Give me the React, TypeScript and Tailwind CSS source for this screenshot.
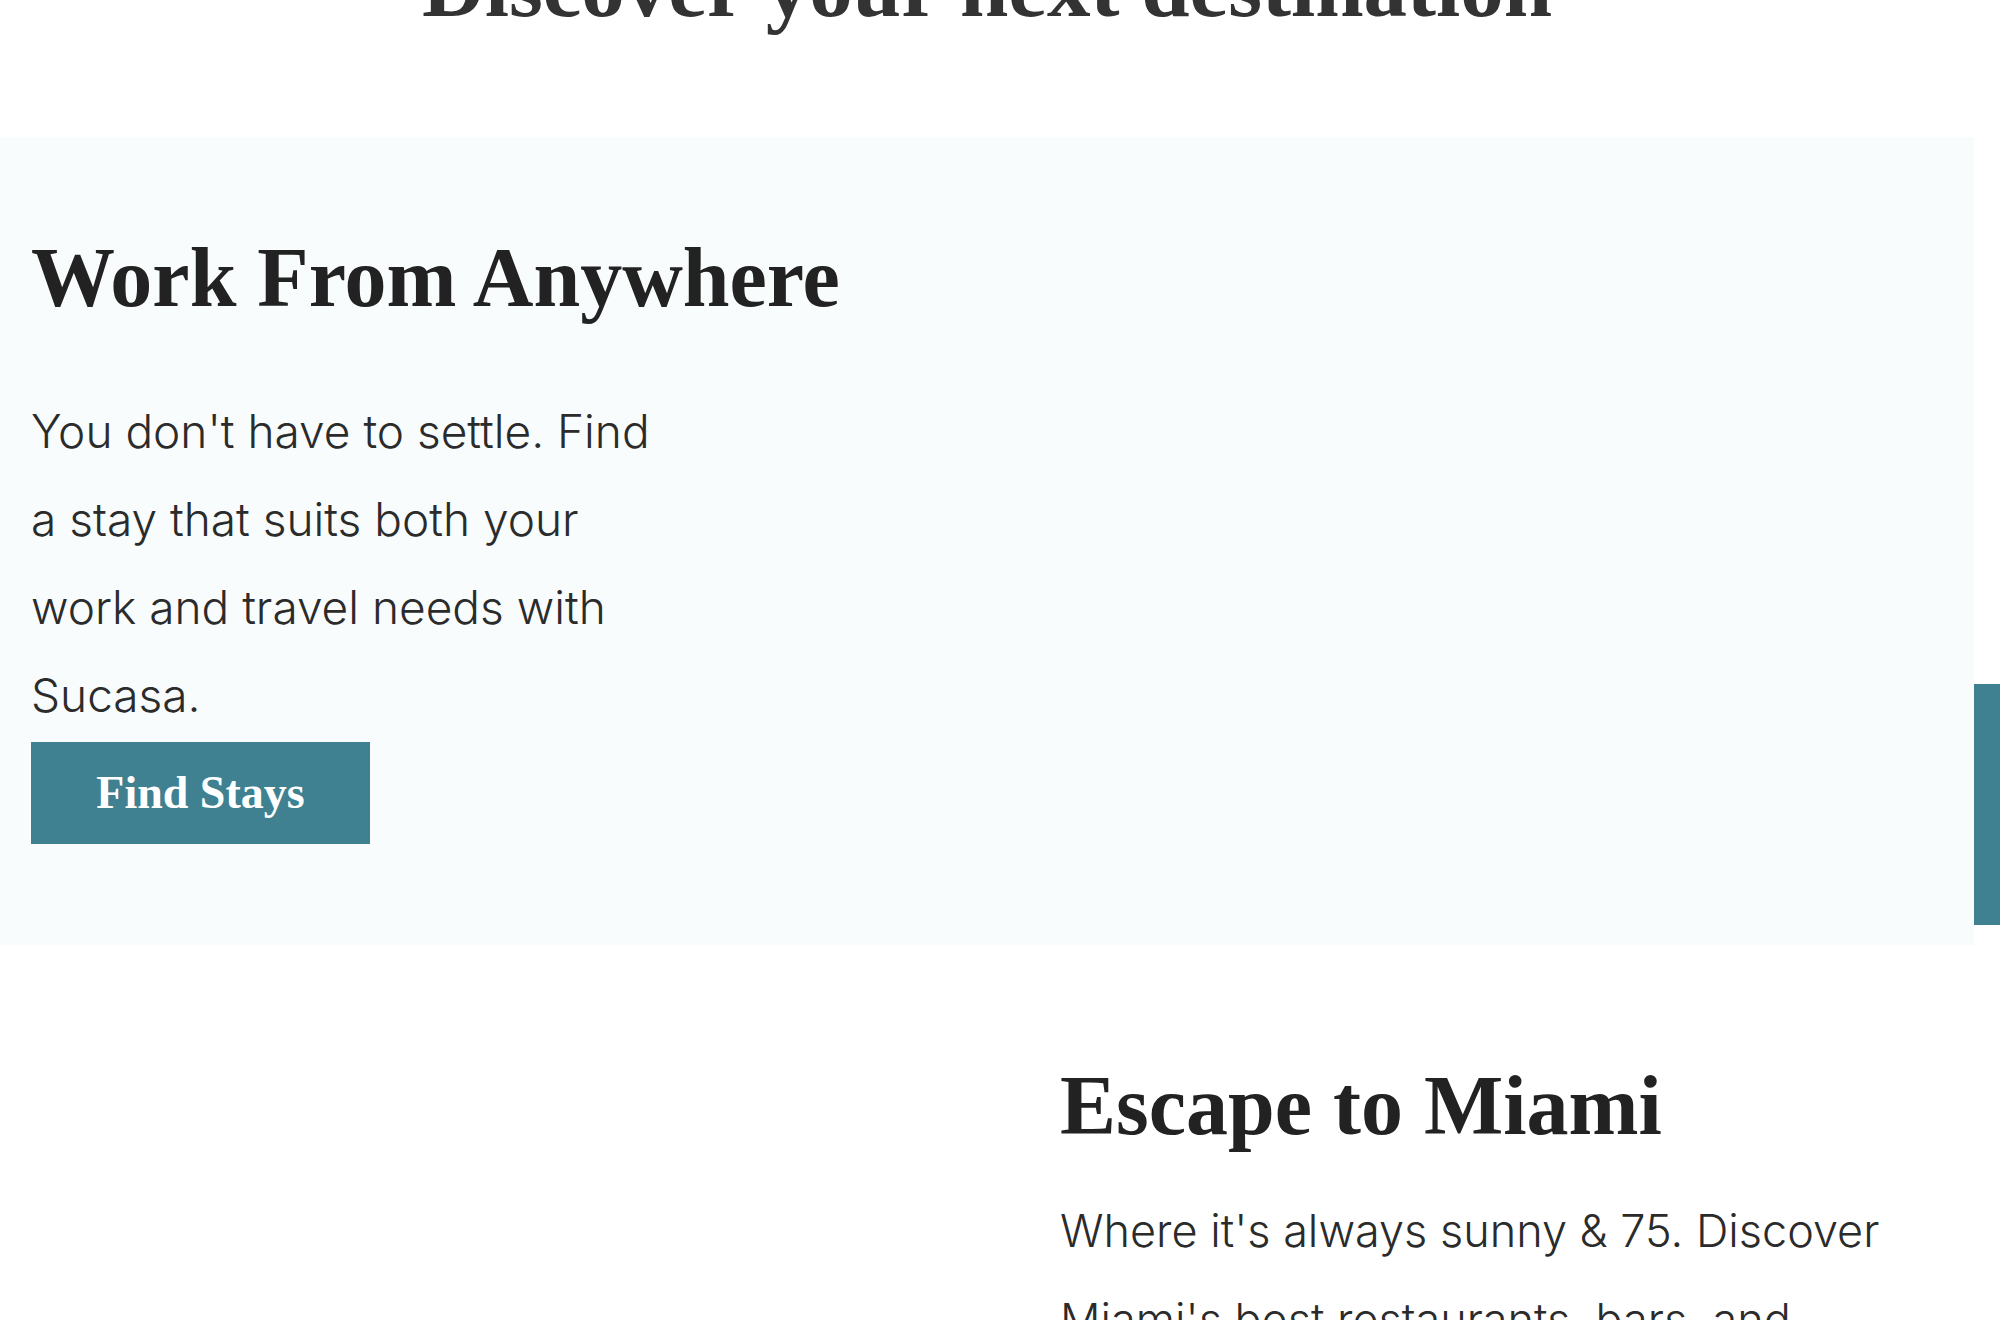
import React from "react";

export default function App() {
  return (
    <div className="relative w-[2000px] h-[1320px] overflow-hidden bg-white">
      <main className="w-[1974px]">
        <h1
          className="-mt-[57px] h-[194px] text-center text-[87px] leading-none font-bold text-[#333333]"
          style={{ fontFamily: '"Liberation Serif", serif' }}
        >
          Discover your next destination
        </h1>

        <section className="h-[808px] bg-[#f8fcfd] pl-[31px] pt-[91px]">
          <h2
            className="text-[84px] leading-[1.2] font-bold text-[#222222]"
            style={{ fontFamily: '"Liberation Serif", serif' }}
          >
            Work From Anywhere
          </h2>
          <p
            className="mt-[58px] w-[700px] text-[46px] leading-[88px] font-light text-[#2b2b2b]"
            style={{ fontFamily: 'Inter, sans-serif' }}
          >
            You don't have to settle. Find
            <br />
            a stay that suits both your
            <br />
            work and travel needs with
            <br />
            Sucasa.
          </p>
          <button
            className="mt-[3px] flex h-[102px] w-[339px] items-center justify-center bg-[#3f8190] text-[46px] font-bold text-white"
            style={{ fontFamily: '"Liberation Serif", serif' }}
          >
            Find Stays
          </button>
        </section>

        <section className="flex h-[600px] bg-white pt-[111px]">
          <div className="w-[1060px] shrink-0" />
          <div className="flex-1 pr-[30px]">
            <h2
              className="text-[84px] leading-[1.2] font-bold text-[#222222]"
              style={{ fontFamily: '"Liberation Serif", serif' }}
            >
              Escape to Miami
            </h2>
            <p
              className="mt-[29px] text-[45px] leading-[89px] font-light text-[#2b2b2b]"
              style={{ fontFamily: 'Inter, sans-serif' }}
            >
              Where it's always sunny &amp; 75. Discover
              <br />
              Miami's best restaurants, bars, and
              <br />
              beaches with Sucasa.
            </p>
          </div>
        </section>
      </main>

      <div className="absolute left-[1974px] top-[684px] h-[241px] w-[26px] bg-[#3f8190]" />
    </div>
  );
}
